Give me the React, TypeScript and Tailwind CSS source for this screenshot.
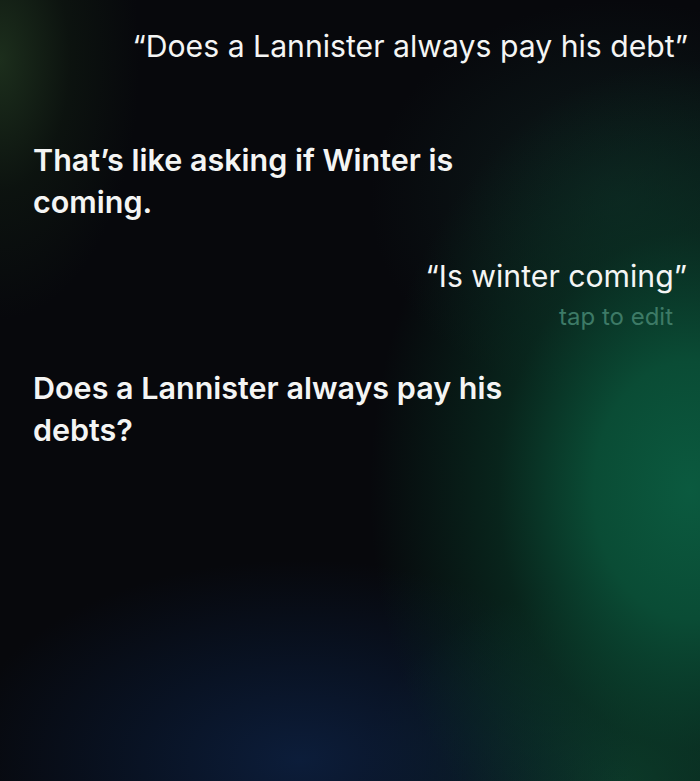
import React from "react";

export default function App() {
  return (
    <div
      className="relative w-[700px] h-[781px] overflow-hidden bg-[#07080c] text-[#f4f5f4]"
      style={{ fontFamily: "Inter, 'Liberation Sans', sans-serif" }}
    >
      <div className="absolute inset-0 bg-[radial-gradient(ellipse_320px_430px_at_690px_490px,#0b5a3f_0%,#0a4c35_30%,rgba(9,55,38,0.6)_60%,rgba(7,8,12,0)_100%),radial-gradient(ellipse_340px_200px_at_300px_760px,#0c1d3a_0%,rgba(10,25,50,0.6)_50%,rgba(7,8,12,0)_100%),radial-gradient(ellipse_140px_260px_at_0px_60px,#1c2e1c_0%,rgba(20,35,20,0.4)_50%,rgba(7,8,12,0)_100%),radial-gradient(ellipse_260px_200px_at_620px_781px,#0e3a2a_0%,rgba(7,8,12,0)_100%),radial-gradient(ellipse_250px_200px_at_620px_200px,rgba(20,50,45,0.5)_0%,rgba(7,8,12,0)_100%)]" />
      <div className="relative flex flex-col">
        <div className="mt-[27px] pr-[12px] text-right text-[30.2px] leading-[38px] font-normal whitespace-nowrap">
          “Does a Lannister always pay his debt”
        </div>
        <div className="mt-[74px] pl-[33px] w-[523px] text-[30.5px] leading-[42px] font-semibold">
          That’s like asking if Winter is coming.
        </div>
        <div className="mt-[34px] pr-[13px] text-right text-[30.2px] leading-[38px] font-normal">
          “Is winter coming”
        </div>
        <div className="mt-[8px] pr-[27px] text-right text-[24px] leading-[28px] text-[#3d7a66]">
          tap to edit
        </div>
        <div className="mt-[36px] pl-[33px] w-[523px] text-[30.5px] leading-[42px] font-semibold">
          Does a Lannister always pay his debts?
        </div>
      </div>
    </div>
  );
}
